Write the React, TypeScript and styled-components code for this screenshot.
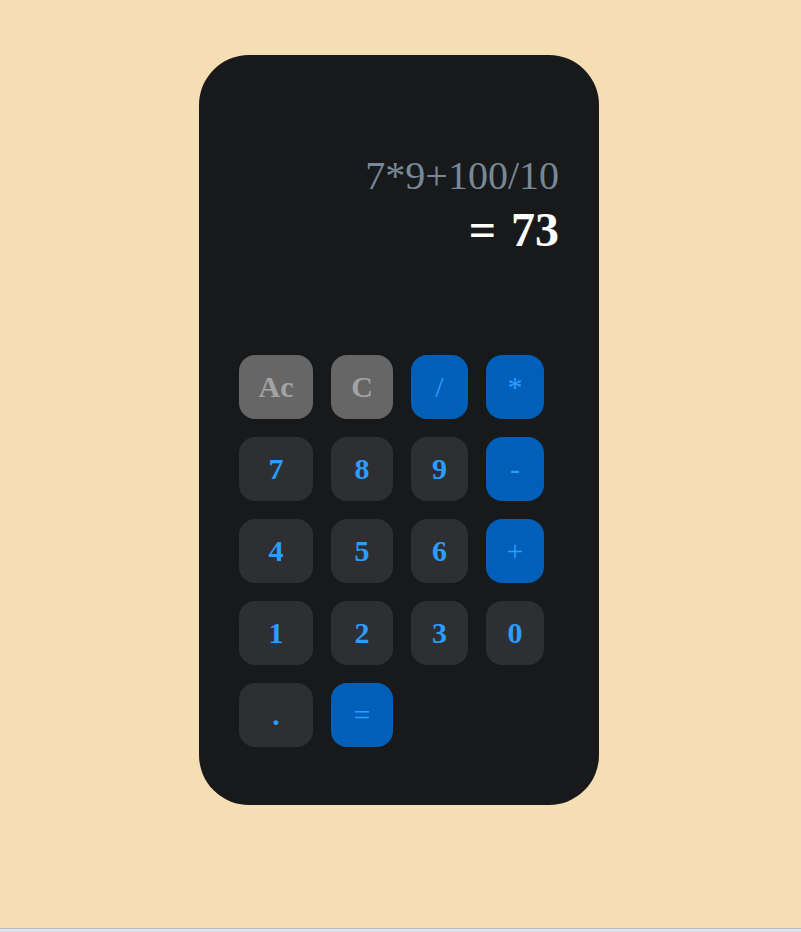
import React, { FC } from "react";
import styled, { createGlobalStyle } from "styled-components";

const GlobalStyle = createGlobalStyle`
  html, body {
    margin: 0;
    padding: 0;
    background: #f5deb3;
    font-family: "Liberation Serif", "Times New Roman", serif;
  }
`;

const Page = styled.div`
  display: flex;
  flex-direction: column;
  min-height: 932px;
`;

const Stage = styled.main`
  flex: 1;
  display: flex;
  justify-content: center;
  align-items: flex-start;
  padding-top: 55px;
  padding-right: 3px;
`;

const BottomBar = styled.div`
  height: 3px;
  border-top: 1px solid #b4bcc6;
  background: #dde2ec;
`;

const Calculator = styled.section`
  box-sizing: border-box;
  width: 400px;
  height: 750px;
  padding: 40px;
  border-radius: 50px;
  background: #18191b;
  display: flex;
  flex-direction: column;
`;

const Display = styled.div`
  box-sizing: border-box;
  height: 260px;
  padding-top: 58px;
  text-align: right;
`;

const Expression = styled.div`
  font-size: 40px;
  line-height: 46px;
  color: #778899;
`;

const Result = styled.div`
  margin-top: 3px;
  font-size: 48px;
  line-height: 56px;
  font-weight: bold;
  color: #ffffff;
  word-spacing: 3px;
`;

const Keypad = styled.div`
  display: grid;
  grid-template-columns: 74px 62px 57px 58px;
  grid-auto-rows: 64px;
  column-gap: 18px;
  row-gap: 18px;
`;

type Kind = "digit" | "op" | "clear";

const Key = styled.button<{ $kind: Kind }>`
  border: none;
  border-radius: 16px;
  padding: 0;
  font-family: "Liberation Serif", "Times New Roman", serif;
  font-size: 30px;
  font-weight: ${p => (p.$kind === "op" ? "normal" : "bold")};
  color: ${p => (p.$kind === "clear" ? "#a3a3a3" : "#2b9dff")};
  background: ${p =>
    p.$kind === "clear" ? "#666666" : p.$kind === "op" ? "#005fb8" : "#2e2f33"};
  display: flex;
  align-items: center;
  justify-content: center;
  cursor: pointer;
`;

const keys: { label: string; kind: Kind }[] = [
  { label: "Ac", kind: "clear" },
  { label: "C", kind: "clear" },
  { label: "/", kind: "op" },
  { label: "*", kind: "op" },
  { label: "7", kind: "digit" },
  { label: "8", kind: "digit" },
  { label: "9", kind: "digit" },
  { label: "-", kind: "op" },
  { label: "4", kind: "digit" },
  { label: "5", kind: "digit" },
  { label: "6", kind: "digit" },
  { label: "+", kind: "op" },
  { label: "1", kind: "digit" },
  { label: "2", kind: "digit" },
  { label: "3", kind: "digit" },
  { label: "0", kind: "digit" },
  { label: ".", kind: "digit" },
  { label: "=", kind: "op" },
];

const App: FC = () => {
  return (
    <Page>
      <GlobalStyle />
      <Stage>
        <Calculator>
          <Display>
            <Expression>7*9+100/10</Expression>
            <Result>= 73</Result>
          </Display>
          <Keypad>
            {keys.map(k => (
              <Key key={k.label} $kind={k.kind}>
                {k.label}
              </Key>
            ))}
          </Keypad>
        </Calculator>
      </Stage>
      <BottomBar />
    </Page>
  );
};

export default App;
